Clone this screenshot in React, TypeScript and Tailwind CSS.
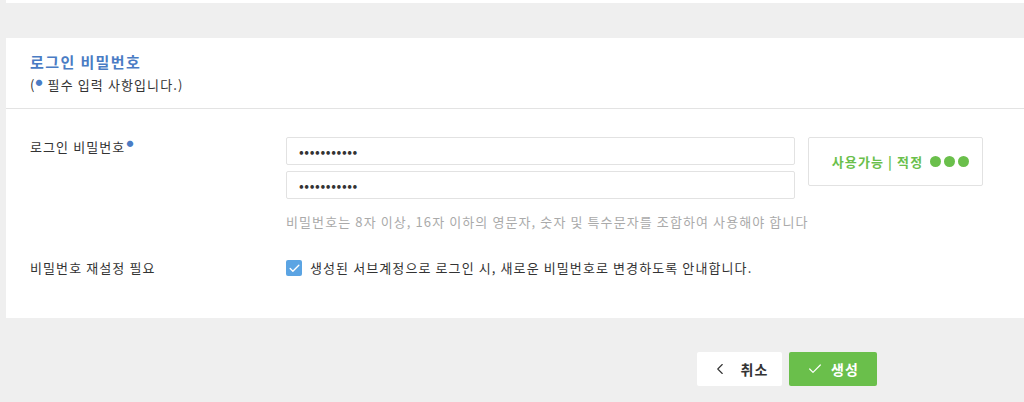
import { Check, ChevronLeft } from 'lucide-react'

const font = { fontFamily: '"Noto Sans CJK KR", "Noto Sans", sans-serif' }

export default function App() {
  return (
    <div className="w-[1024px] h-[402px] bg-[#efefef] overflow-hidden text-[#333] tracking-[1.1px]" style={font}>
      <div className="ml-[6px] h-[3px] bg-white" />

      <div className="ml-[6px] mt-[35px] h-[280px] bg-white">
        {/* header */}
        <div className="h-[71px] px-6 pt-[13px] border-b border-[#e3e3e3]">
          <h2 className="text-[15px] font-bold leading-[22px] tracking-[1.4px] text-[#4a7cc4]">로그인 비밀번호</h2>
          <p className="text-[13px] leading-[20px] mt-[2px] text-[#333]">
            (<span className="text-[#4a7cc4] text-[7px] align-top leading-[14px]">●</span> 필수 입력 사항입니다.)
          </p>
        </div>

        {/* password row */}
        <div className="flex pt-[28px] pl-6">
          <div className="w-[256px] text-[13px] leading-[18px] pt-[1px]">
            로그인 비밀번호<span className="text-[#4a7cc4] text-[7px] align-top leading-[10px] ml-[1px]">●</span>
          </div>
          <div className="flex flex-col">
            <div className="flex">
              <div className="flex flex-col gap-[6px] w-[509px]">
                <input
                  type="password"
                  readOnly
                  value="password123"
                  className="h-[28px] px-3 border border-[#e2e2e2] rounded-[2px] text-[14px] tracking-[0.6px] text-[#333] outline-none"
                />
                <input
                  type="password"
                  readOnly
                  value="password123"
                  className="h-[28px] px-3 border border-[#e2e2e2] rounded-[2px] text-[14px] tracking-[0.6px] text-[#333] outline-none"
                />
              </div>
              <div className="ml-[13px] w-[175px] h-[49px] pl-[10px] border border-[#e2e2e2] rounded-[2px] flex items-center justify-center gap-[7px] text-[13px] font-bold text-[#6abf4b]">
                <span>사용가능 | 적정</span>
                <span className="flex gap-[3px]">
                  <span className="w-[11px] h-[11px] rounded-full bg-[#6abf4b]" />
                  <span className="w-[11px] h-[11px] rounded-full bg-[#6abf4b]" />
                  <span className="w-[11px] h-[11px] rounded-full bg-[#6abf4b]" />
                </span>
              </div>
            </div>
            <p className="mt-[14px] text-[13px] leading-[18px] text-[#aaa]">
              비밀번호는 8자 이상, 16자 이하의 영문자, 숫자 및 특수문자를 조합하여 사용해야 합니다
            </p>
          </div>
        </div>

        {/* reset row */}
        <div className="flex pl-6 mt-[28px]">
          <div className="w-[256px] text-[13px] leading-[18px]">비밀번호 재설정 필요</div>
          <label className="flex items-center gap-[8px] text-[13px] leading-[18px]">
            <span className="w-[16px] h-[16px] rounded-[2px] bg-[#5ba4e3] flex items-center justify-center">
              <Check size={13} strokeWidth={2.5} className="text-white" />
            </span>
            생성된 서브계정으로 로그인 시, 새로운 비밀번호로 변경하도록 안내합니다.
          </label>
        </div>
      </div>

      {/* actions */}
      <div className="flex justify-end gap-[7px] mr-[147px] mt-[34px]">
        <button className="w-[85px] h-[34px] bg-white rounded-[2px] flex items-center justify-center gap-[12px] text-[14px] font-bold text-[#333]">
          <ChevronLeft size={18} strokeWidth={1.5} />
          취소
        </button>
        <button className="w-[88px] h-[34px] bg-[#6abf4b] rounded-[2px] flex items-center justify-center gap-[8px] text-[14px] font-bold text-white">
          <Check size={16} strokeWidth={1.8} />
          생성
        </button>
      </div>
    </div>
  )
}
